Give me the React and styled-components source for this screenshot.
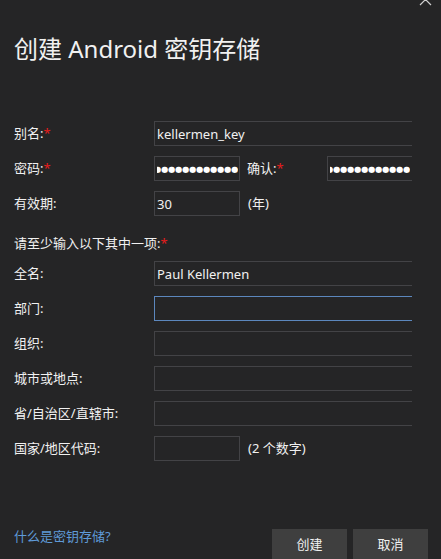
import React from "react";
import styled, { createGlobalStyle } from "styled-components";

const GlobalStyle = createGlobalStyle`
  html, body {
    margin: 0;
    padding: 0;
    background: #252526;
    overflow: hidden;
  }
  * { box-sizing: border-box; }
`;

const FONT = `"Noto Sans", "Noto Sans CJK SC", sans-serif`;

const Dialog = styled.div`
  position: relative;
  width: 441px;
  height: 559px;
  overflow: hidden;
  background: #252526;
  color: #f1f1f1;
  font-family: ${FONT};
  display: flex;
  flex-direction: column;
`;

const CloseButton = styled.div`
  position: absolute;
  top: -7px;
  left: 419px;
  width: 13px;
  height: 13px;
  color: #d0d0d0;
  display: flex;
`;

const Title = styled.h1`
  margin: 33px 0 0 14px;
  font-size: 24px;
  font-weight: 400;
  line-height: 32px;
  color: #f1f1f1;
  white-space: nowrap;
`;

const Form = styled.div`
  margin: 56px 0 0 14px;
  width: 398px;
  overflow: hidden;
  display: flex;
  flex-direction: column;
  gap: 10px;
`;

const Row = styled.div`
  display: flex;
  align-items: center;
  height: 25px;
`;

const Label = styled.div`
  flex: none;
  width: ${(p) => p.$w || 140}px;
  margin-left: ${(p) => p.$ml || 0}px;
  font-size: 13px;
  line-height: 15px;
  white-space: nowrap;
`;

const SectionLabel = styled.div`
  height: 25px;
  padding-top: 10px;
  font-size: 13px;
  line-height: 15px;
  white-space: nowrap;
`;

const Req = styled.span`
  color: #e51c1c;
`;

const Field = styled.div`
  flex: none;
  width: ${(p) => (p.$short ? 86 : 300)}px;
  height: 25px;
  border: 1px solid ${(p) => (p.$focus ? "#5c87bd" : "#434346")};
  background: #252526;
  display: flex;
  align-items: center;
  padding: 0 2px;
  font-size: 13px;
  color: #f1f1f1;
  white-space: nowrap;
  overflow: hidden;
`;

const Dots = styled.div`
  flex: none;
  width: ${(p) => p.$w}px;
  display: flex;
  justify-content: flex-end;
  overflow: hidden;
`;

const DotsInner = styled.span`
  flex: none;
  font-family: "DejaVu Sans", sans-serif;
  font-size: 8.4px;
  letter-spacing: -0.3px;
  line-height: 10px;
  color: #ffffff;
`;

const Note = styled.div`
  margin-left: 8px;
  font-size: 13px;
  line-height: 15px;
  white-space: nowrap;
`;

const Footer = styled.div`
  margin-top: auto;
  height: 30px;
  display: flex;
  align-items: flex-start;
  padding: 0 13px 0 14px;
`;

const HelpLink = styled.a`
  margin-top: 0;
  font-size: 13px;
  line-height: 15px;
  color: #5f9ad8;
  text-decoration: none;
  cursor: pointer;
`;

const Buttons = styled.div`
  margin-left: auto;
  display: flex;
  gap: 6px;
`;

const Button = styled.button`
  width: 75px;
  height: 30px;
  border: none;
  background: #3f3f3f;
  color: #f1f1f1;
  font-family: ${FONT};
  font-size: 13px;
  padding: 0;
  padding-bottom: 1px;
`;

const DOTS = "●●●●●●●●●●●●●●●●";

const PasswordText = ({ width }) => (
  <Dots $w={width}>
    <DotsInner>{DOTS}</DotsInner>
  </Dots>
);

export default function App() {
  return (
    <>
      <GlobalStyle />
      <Dialog>
        <CloseButton>
          <svg width="13" height="13" viewBox="0 0 13 13">
            <path d="M1 1 L12 12 M12 1 L1 12" stroke="currentColor" strokeWidth="1.2" fill="none" />
          </svg>
        </CloseButton>
        <Title>创建 Android 密钥存储</Title>
        <Form>
          <Row>
            <Label>别名:<Req>*</Req></Label>
            <Field>kellermen_key</Field>
          </Row>
          <Row>
            <Label>密码:<Req>*</Req></Label>
            <Field $short>
              <PasswordText width={81} />
            </Field>
            <Label $w={80} $ml={7}>确认:<Req>*</Req></Label>
            <Field>
              <PasswordText width={80} />
            </Field>
          </Row>
          <Row>
            <Label>有效期:</Label>
            <Field $short>30</Field>
            <Note>(年)</Note>
          </Row>
          <SectionLabel>请至少输入以下其中一项:<Req>*</Req></SectionLabel>
          <Row>
            <Label>全名:</Label>
            <Field>Paul Kellermen</Field>
          </Row>
          <Row>
            <Label>部门:</Label>
            <Field $focus />
          </Row>
          <Row>
            <Label>组织:</Label>
            <Field />
          </Row>
          <Row>
            <Label>城市或地点:</Label>
            <Field />
          </Row>
          <Row>
            <Label>省/自治区/直辖市:</Label>
            <Field />
          </Row>
          <Row>
            <Label>国家/地区代码:</Label>
            <Field $short />
            <Note>(2 个数字)</Note>
          </Row>
        </Form>
        <Footer>
          <HelpLink>什么是密钥存储?</HelpLink>
          <Buttons>
            <Button>创建</Button>
            <Button>取消</Button>
          </Buttons>
        </Footer>
      </Dialog>
    </>
  );
}
